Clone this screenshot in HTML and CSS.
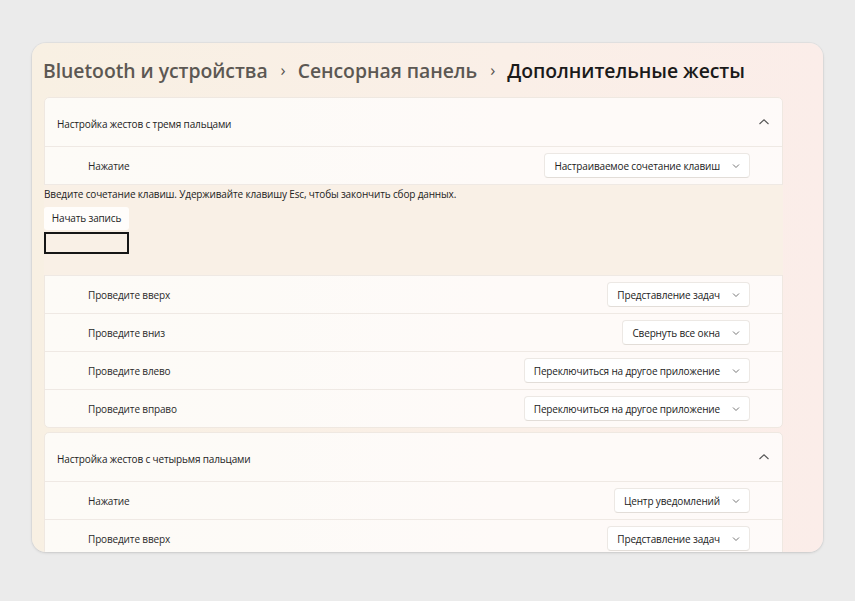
FILE: index.html
```html
<!DOCTYPE html>
<html lang="ru">
<head>
<meta charset="utf-8">
<title>Дополнительные жесты</title>
<link rel="stylesheet" href="styles.css">
</head>
<body>
<div class="window">
  <div class="title">
    <span class="crumb">Bluetooth и устройства</span>
    <span class="sep">›</span>
    <span class="crumb">Сенсорная панель</span>
    <span class="sep">›</span>
    <span class="crumb current">Дополнительные жесты</span>
  </div>
  <div class="content">
    <div class="card">
      <div class="card-header">
        <span>Настройка жестов с тремя пальцами</span>
        <svg class="chev-up" width="12" height="8" viewBox="0 0 12 8"><path d="M1.5 6 L6 1.8 L10.5 6" fill="none" stroke="#555" stroke-width="1.1"/></svg>
      </div>
      <div class="row">
        <span class="label">Нажатие</span>
        <div class="dropdown"><span>Настраиваемое сочетание клавиш</span><svg width="8" height="6" viewBox="0 0 8 6"><path d="M1 1.5 L4 4.5 L7 1.5" fill="none" stroke="#777" stroke-width="1"/></svg></div>
      </div>
      <div class="record">
        <div class="hint">Введите сочетание клавиш. Удерживайте клавишу Esc, чтобы закончить сбор данных.</div>
        <div class="rec-btn">Начать запись</div>
        <div class="rec-box"></div>
      </div>
      <div class="row">
        <span class="label">Проведите вверх</span>
        <div class="dropdown"><span>Представление задач</span><svg width="8" height="6" viewBox="0 0 8 6"><path d="M1 1.5 L4 4.5 L7 1.5" fill="none" stroke="#777" stroke-width="1"/></svg></div>
      </div>
      <div class="row">
        <span class="label">Проведите вниз</span>
        <div class="dropdown"><span>Свернуть все окна</span><svg width="8" height="6" viewBox="0 0 8 6"><path d="M1 1.5 L4 4.5 L7 1.5" fill="none" stroke="#777" stroke-width="1"/></svg></div>
      </div>
      <div class="row">
        <span class="label">Проведите влево</span>
        <div class="dropdown"><span>Переключиться на другое приложение</span><svg width="8" height="6" viewBox="0 0 8 6"><path d="M1 1.5 L4 4.5 L7 1.5" fill="none" stroke="#777" stroke-width="1"/></svg></div>
      </div>
      <div class="row">
        <span class="label">Проведите вправо</span>
        <div class="dropdown"><span>Переключиться на другое приложение</span><svg width="8" height="6" viewBox="0 0 8 6"><path d="M1 1.5 L4 4.5 L7 1.5" fill="none" stroke="#777" stroke-width="1"/></svg></div>
      </div>
    </div>
    <div class="card">
      <div class="card-header">
        <span>Настройка жестов с четырьмя пальцами</span>
        <svg class="chev-up" width="12" height="8" viewBox="0 0 12 8"><path d="M1.5 6 L6 1.8 L10.5 6" fill="none" stroke="#555" stroke-width="1.1"/></svg>
      </div>
      <div class="row">
        <span class="label">Нажатие</span>
        <div class="dropdown"><span>Центр уведомлений</span><svg width="8" height="6" viewBox="0 0 8 6"><path d="M1 1.5 L4 4.5 L7 1.5" fill="none" stroke="#777" stroke-width="1"/></svg></div>
      </div>
      <div class="row">
        <span class="label">Проведите вверх</span>
        <div class="dropdown"><span>Представление задач</span><svg width="8" height="6" viewBox="0 0 8 6"><path d="M1 1.5 L4 4.5 L7 1.5" fill="none" stroke="#777" stroke-width="1"/></svg></div>
      </div>
    </div>
  </div>
</div>
</body>
</html>
```

FILE: styles.css
```css
* { box-sizing: border-box; }
html, body { margin: 0; padding: 0; }
body {
  background: #ebebeb;
  font-family: "Open Sans", "Noto Sans", sans-serif;
  color: #1c1c1c;
  width: 855px;
  height: 601px;
  overflow: hidden;
}
.window {
  margin: 43px 0 0 32px;
  width: 791px;
  height: 509px;
  border-radius: 14px;
  overflow: hidden;
  background: linear-gradient(90deg, #f8f0e3 0%, #faefe7 60%, #fbede9 100%);
  box-shadow: 0 1px 3px rgba(0,0,0,0.12), 0 0 0 1px rgba(0,0,0,0.03);
}
.title {
  height: 54px;
  padding: 14px 0 0 11px;
  font-size: 19.4px;
  font-weight: 600;
  line-height: 28px;
  color: #5c5853;
  white-space: nowrap;
  letter-spacing: -0.05px;
}
.title .sep {
  display: inline-block;
  margin: 0 7px 0 8px;
  font-size: 17px;
  font-weight: 400;
  color: #57534f;
  position: relative;
  top: -2px;
}
.title .current { color: #1a1a1a; }
.content {
  margin-left: 12px;
  width: 739px;
}
.card {
  background: rgba(255,255,255,0.7);
  border: 1px solid #efe8e1;
  border-radius: 5px;
  margin-bottom: 4px;
  font-size: 10px;
  letter-spacing: -0.15px;
}
.card-header {
  height: 48px;
  display: flex;
  align-items: center;
  justify-content: space-between;
  padding: 3px 12px 0 12px;
  color: #222;
}
.chev-up { margin-top: -3px; }
.row {
  height: 38px;
  border-top: 1px solid #efe9e4;
  display: flex;
  align-items: center;
  justify-content: space-between;
  padding: 0 32px 0 43px;
  color: #2a2a2a;
}
.dropdown {
  height: 25px;
  display: flex;
  align-items: center;
  gap: 12px;
  padding: 0 9px 0 9px;
  background: #ffffff;
  border: 1px solid #ece8e4;
  border-bottom-color: #e2ddd8;
  border-radius: 4px;
  color: #222;
}
.dropdown svg { flex: none; }
.record {
  margin: 0 -1px;
  height: 91px;
  background: #f9f0e6;
  border-top: 1px solid #efe9e4;
  padding: 2px 0 0 0;
}
.hint {
  line-height: 15px;
  color: #222;
}
.rec-btn {
  margin-top: 5px;
  width: 85px;
  height: 23px;
  background: #fffdfb;
  border-radius: 3px;
  line-height: 23px;
  text-align: center;
  color: #222;
}
.rec-box {
  margin-top: 2px;
  width: 85px;
  height: 22px;
  border: 2px solid #161616;
  background: #f9f0e6;
}
```
